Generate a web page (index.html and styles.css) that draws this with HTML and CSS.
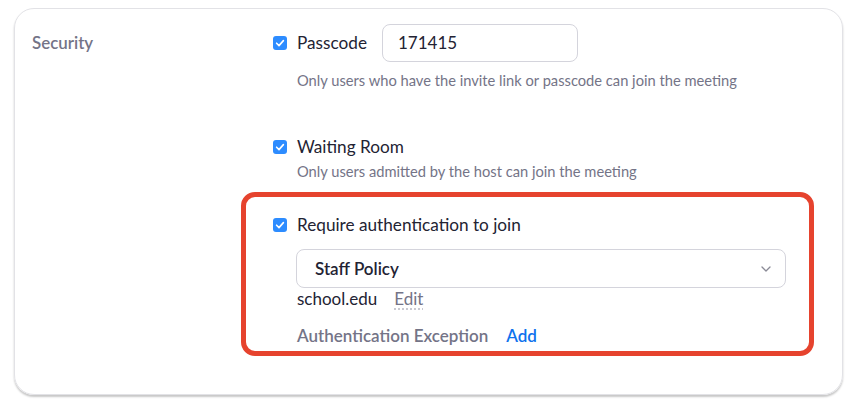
FILE: index.html
```html
<!doctype html>
<html>
<head>
	<meta charset='utf-8' />
	<title>Security</title>
	<link rel="stylesheet" href="styles.css">
</head>

<body>
	<div class='card'>
		<div class='label'>Security</div>
		<div class='options'>
			<!-- passcode -->
			<div class='row'>
				<svg class='check' viewBox='0 0 14 14'><rect width='14' height='14' rx='3' fill='#2d8cff'/><path d='M3.6 7.2 L6 9.6 L10.4 4.6' fill='none' stroke='#fff' stroke-width='1.6' stroke-linecap='round' stroke-linejoin='round'/></svg>
				<span class='title'>Passcode</span>
				<div class='input'>171415</div>
			</div>
			<p class='desc'>Only users who have the invite link or passcode can join the meeting</p>

			<!-- waiting room -->
			<div class='row row-gap'>
				<svg class='check' viewBox='0 0 14 14'><rect width='14' height='14' rx='3' fill='#2d8cff'/><path d='M3.6 7.2 L6 9.6 L10.4 4.6' fill='none' stroke='#fff' stroke-width='1.6' stroke-linecap='round' stroke-linejoin='round'/></svg>
				<span class='title'>Waiting Room</span>
			</div>
			<p class='desc desc-tight'>Only users admitted by the host can join the meeting</p>

			<!-- authentication -->
			<div class='mark'>
				<div class='row'>
					<svg class='check' viewBox='0 0 14 14'><rect width='14' height='14' rx='3' fill='#2d8cff'/><path d='M3.6 7.2 L6 9.6 L10.4 4.6' fill='none' stroke='#fff' stroke-width='1.6' stroke-linecap='round' stroke-linejoin='round'/></svg>
					<span class='title'>Require authentication to join</span>
				</div>
				<div class='select'>
					<span>Staff Policy</span>
					<svg class='chev' viewBox='0 0 10 6'><path d='M1 1 L5 5 L9 1' fill='none' stroke='#8a8a96' stroke-width='1.3' stroke-linecap='round' stroke-linejoin='round'/></svg>
				</div>
				<div class='domain'>school.edu<a class='edit'>Edit</a></div>
				<div class='exception'>Authentication Exception<a class='add'>Add</a></div>
			</div>
		</div>
	</div>
</body>
</html>
```

FILE: styles.css
```css
/*reset*/
body,div,p{margin:0;padding:0;}
body{background:#fff;font-family:Lato,"Open Sans",sans-serif;color:#232333;}

/*card*/
.card{display:flex;margin:8px 7px 8px 14px;padding:15px 0 38px 17px;border:1px solid #e2e2e6;border-radius:20px;box-shadow:0 2px 2px rgba(0,0,0,.22);}
.label{width:241px;flex:none;font-size:16.9px;font-weight:600;line-height:38px;color:#747487;}
.options{display:flex;flex-direction:column;}

/*rows*/
.row{display:flex;align-items:center;height:38px;}
.row-gap{height:22px;margin-top:47px;}
.check{width:14px;height:14px;flex:none;margin-right:10px;}
.title{font-size:17.2px;line-height:22px;}
.input{width:196px;height:38px;box-sizing:border-box;margin-left:15px;padding-left:15px;border:1px solid #d4d4dc;border-radius:8px;font-size:17px;line-height:36px;}
.desc{margin:9px 0 0 24px;font-size:14.7px;line-height:18px;color:#747487;}
.desc-tight{margin-top:4px;}

/*red highlight*/
.mark{width:573px;box-sizing:border-box;margin:12px 0 0 -32px;padding:17px 0 5px 27px;border:5px solid #e6432e;border-radius:14px;}
.mark .row{height:22px;}
.select{display:flex;align-items:center;justify-content:space-between;width:490px;height:39px;box-sizing:border-box;margin:13px 0 0 23px;padding:0 14px 0 18px;border:1px solid #d4d4dc;border-radius:8px;font-size:17px;font-weight:600;}
.chev{width:10px;height:6px;}
.domain{margin:1px 0 0 24px;font-size:17px;line-height:20px;}
.edit{margin-left:17px;color:#747487;text-decoration:underline dotted #b8b8c2;text-underline-offset:4px;}
.exception{margin:17px 0 0 24px;font-size:17px;line-height:20px;font-weight:600;color:#747487;}
.add{margin-left:18px;color:#0e72ed;}
```
